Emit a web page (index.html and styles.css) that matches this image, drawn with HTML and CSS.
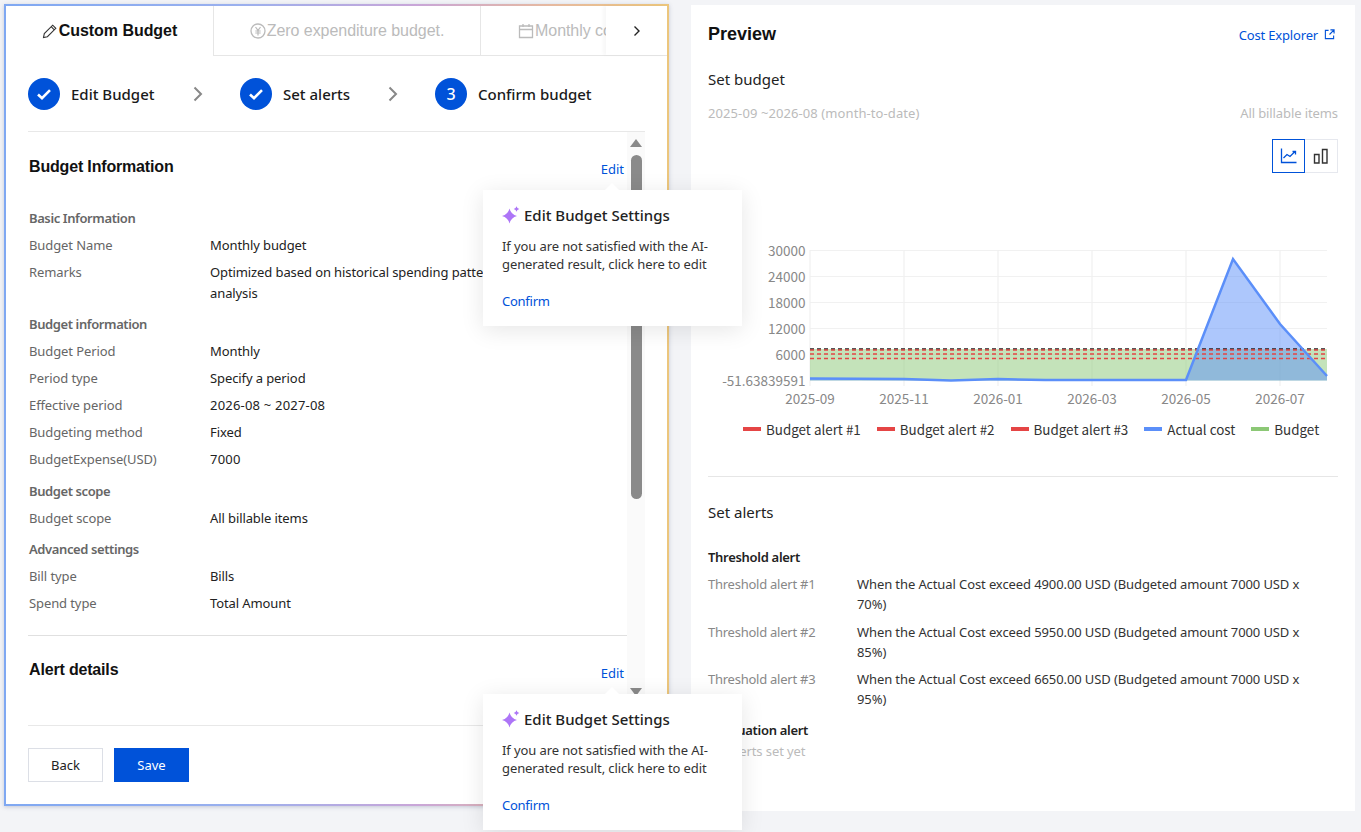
FILE: index.html
```html
<!DOCTYPE html>
<html lang="en">
<head>
<meta charset="utf-8">
<title>Custom Budget</title>
<link rel="stylesheet" href="styles.css">
</head>
<body>
<main class="page">
  <section class="editor">
    <div class="tabs">
      <div class="tab tab-active tab-one">
        <svg class="tab-icon" viewBox="0 0 16 16"><path d="M1.500 14.500l.8-3.900 8.400-8.400 3.100 3.100-8.400 8.400-3.900.8zM9.200 3.700l3.100 3.100" fill="none" stroke="#333" stroke-width="1.100"/></svg>
        <span>Custom Budget</span>
      </div>
      <div class="tab tab-two">
        <svg class="tab-icon" viewBox="0 0 16 16"><circle cx="8" cy="8" r="7" fill="none" stroke="#bbb" stroke-width="1.300"/><path d="M5.500 4l2.500 3.400L10.500 4M8 7.400V12.500M5.300 8h5.400M5.300 10h5.400" fill="none" stroke="#bbb" stroke-width="1.200"/></svg>
        <span>Zero expenditure budget.</span>
      </div>
      <div class="tab tab-three">
        <svg class="tab-icon" viewBox="0 0 16 16"><path d="M1.500 3h13v11.500h-13zM1.500 6.500h13M5 1v3M11 1v3" fill="none" stroke="#bbb" stroke-width="1.300"/></svg>
        <span>Monthly cost budget</span>
      </div>
      <div class="tab-next">
        <svg class="chev-small" viewBox="0 0 8 12"><path d="M1.500 1.500L6 6l-4.500 4.500" fill="none" stroke="#222" stroke-width="1.400"/></svg>
      </div>
    </div>

    <div class="steps">
      <div class="step step-first">
        <span class="step-dot"><svg viewBox="0 0 16 16"><path d="M2 8.500l4 3.700 8-8" fill="none" stroke="#fff" stroke-width="2.600"/></svg></span>
        <span class="step-label">Edit Budget</span>
      </div>
      <svg class="step-chev" viewBox="0 0 10 16"><path d="M1.500 1.500L8 8l-6.500 6.500" fill="none" stroke="#888" stroke-width="2"/></svg>
      <div class="step step-second">
        <span class="step-dot"><svg viewBox="0 0 16 16"><path d="M2 8.500l4 3.700 8-8" fill="none" stroke="#fff" stroke-width="2.600"/></svg></span>
        <span class="step-label">Set alerts</span>
      </div>
      <svg class="step-chev" viewBox="0 0 10 16"><path d="M1.500 1.500L8 8l-6.500 6.500" fill="none" stroke="#888" stroke-width="2"/></svg>
      <div class="step step-third">
        <span class="step-dot">3</span>
        <span class="step-label">Confirm budget</span>
      </div>
    </div>

    <div class="scroll-wrap">
      <div class="scroll-content">
        <div class="section-head">
          <h2>Budget Information</h2>
          <a class="link edit-link">Edit</a>
        </div>
        <h3 class="group group-first">Basic Information</h3>
        <div class="row"><span class="key">Budget Name</span><span class="val">Monthly budget</span></div>
        <div class="row row-tall"><span class="key">Remarks</span><span class="val">Optimized based on historical spending pattern analysis</span></div>
        <h3 class="group">Budget information</h3>
        <div class="row"><span class="key">Budget Period</span><span class="val">Monthly</span></div>
        <div class="row"><span class="key">Period type</span><span class="val">Specify a period</span></div>
        <div class="row"><span class="key">Effective period</span><span class="val val-num">2026-08 ~ 2027-08</span></div>
        <div class="row"><span class="key">Budgeting method</span><span class="val">Fixed</span></div>
        <div class="row"><span class="key">BudgetExpense(USD)</span><span class="val val-num">7000</span></div>
        <h3 class="group">Budget scope</h3>
        <div class="row"><span class="key">Budget scope</span><span class="val">All billable items</span></div>
        <h3 class="group group-tight">Advanced settings</h3>
        <div class="row"><span class="key">Bill type</span><span class="val">Bills</span></div>
        <div class="row"><span class="key">Spend type</span><span class="val">Total Amount</span></div>
        <div class="section-head section-alert">
          <h2>Alert details</h2>
          <a class="link edit-link">Edit</a>
        </div>
      </div>
      <div class="scrollbar">
        <span class="arrow-up"></span>
        <span class="thumb"></span>
        <span class="arrow-down"></span>
      </div>
    </div>

    <div class="footer">
      <button class="btn btn-back">Back</button>
      <button class="btn btn-save">Save</button>
    </div>
  </section>

  <section class="preview">
    <div class="preview-head">
      <h1>Preview</h1>
      <a class="link explorer">Cost Explorer
        <svg viewBox="0 0 12 12"><path d="M5 1.500H1.500v9h9V7M7 1h4v4M11 1L6 6" fill="none" stroke="#0052d9" stroke-width="1.200"/></svg>
      </a>
    </div>
    <div class="sub-title">Set budget</div>
    <div class="meta"><span class="meta-date">2025-09 ~2026-08 (month-to-date)</span><span>All billable items</span></div>
    <div class="toggle">
      <span class="toggle-btn toggle-on"><svg viewBox="0 0 18 18"><path d="M1.500 1.500v14h15" fill="none" stroke="#0052d9" stroke-width="1.300"/><path d="M3.500 11l3.500-3.500 3 2 5-5M12.500 4.500h3v3" fill="none" stroke="#0052d9" stroke-width="1.300"/></svg></span>
      <span class="toggle-btn"><svg viewBox="0 0 18 18"><path d="M2.500 7.500h4.500v8.500H2.500zM10.500 2.500H15v13.500h-4.500z" fill="none" stroke="#333" stroke-width="1.400"/></svg></span>
    </div>
    <svg class="chart" viewBox="0 -10 630 210">
      <g stroke="#f1f1f1" stroke-width="1.200">
        <path d="M102 2.500H619M102 28.500H619M102 54.500H619M102 80.500H619M102 106.500H619"/>
        <path d="M102 2V138M196 2V138M290 2V138M384 2V138M478 2V138M572 2V138"/>
      </g>
      <path d="M102 101H619V132.500H102z" fill="#9dd18c" fill-opacity=".6"/>
      <path d="M102 130.500L196 131L290 133L384 132.500L478 132.500L525 11L572 76L619 128V132.500H102z" fill="#5b8ff9" fill-opacity=".5"/>
      <g fill="none" stroke-width="1.300" stroke-dasharray="4 3">
        <path d="M102 101H619" stroke="#222"/>
        <path d="M102 102H619" stroke="#e54545"/>
        <path d="M102 106H619" stroke="#e54545"/>
        <path d="M102 110.500H619" stroke="#e54545"/>
      </g>
      <path d="M102 130.500L196 131L243 132.500L290 131L337 132L478 132L525 11L572 76L619 128" fill="none" stroke="#5b8ff9" stroke-width="2.500"/>
      <g class="axis" text-anchor="end">
        <text x="97.500" y="7.500">30000</text>
        <text x="97.500" y="33.500">24000</text>
        <text x="97.500" y="59.500">18000</text>
        <text x="97.500" y="85.500">12000</text>
        <text x="97.500" y="111.500">6000</text>
        <text x="97.500" y="137.500">-51.63839591</text>
      </g>
      <g class="axis" text-anchor="middle">
        <text x="102" y="156">2025-09</text>
        <text x="196" y="156">2025-11</text>
        <text x="290" y="156">2026-01</text>
        <text x="384" y="156">2026-03</text>
        <text x="478" y="156">2026-05</text>
        <text x="572" y="156">2026-07</text>
      </g>
    </svg>
    <div class="legend">
      <span class="legend-item"><i class="swatch swatch-red"></i>Budget alert #1</span>
      <span class="legend-item"><i class="swatch swatch-red"></i>Budget alert #2</span>
      <span class="legend-item"><i class="swatch swatch-red"></i>Budget alert #3</span>
      <span class="legend-item"><i class="swatch swatch-blue"></i>Actual cost</span>
      <span class="legend-item"><i class="swatch swatch-green"></i>Budget</span>
    </div>
    <div class="alerts">
      <div class="alerts-title">Set alerts</div>
      <h4>Threshold alert</h4>
      <div class="alert-row"><span class="alert-key">Threshold alert #1</span><span class="alert-val">When the Actual Cost exceed 4900.00 USD (Budgeted amount 7000 USD x 70%)</span></div>
      <div class="alert-row"><span class="alert-key">Threshold alert #2</span><span class="alert-val">When the Actual Cost exceed 5950.00 USD (Budgeted amount 7000 USD x 85%)</span></div>
      <div class="alert-row"><span class="alert-key">Threshold alert #3</span><span class="alert-val">When the Actual Cost exceed 6650.00 USD (Budgeted amount 7000 USD x 95%)</span></div>
      <h4 class="fluct">Fluctuation alert</h4>
      <div class="none">No alerts set yet</div>
    </div>
  </section>

  <aside class="pop pop-one">
    <div class="pop-title">
      <svg viewBox="0 0 18 18"><path d="M7.500 2.500Q9 8.500 15 10Q9 11.500 7.500 17.500Q6 11.500 0 10Q6 8.500 7.500 2.500z" fill="#ad75f7"/><path d="M14.500 .2Q15 2.500 17.300 3Q15 3.500 14.500 5.800Q14 3.500 11.700 3Q14 2.500 14.500 .2z" fill="#ad75f7"/></svg>
      <span>Edit Budget Settings</span>
    </div>
    <p>If you are not satisfied with the AI-generated result, click here to edit</p>
    <a class="link pop-confirm">Confirm</a>
  </aside>
  <aside class="pop pop-two">
    <div class="pop-title">
      <svg viewBox="0 0 18 18"><path d="M7.500 2.500Q9 8.500 15 10Q9 11.500 7.500 17.500Q6 11.500 0 10Q6 8.500 7.500 2.500z" fill="#ad75f7"/><path d="M14.500 .2Q15 2.500 17.300 3Q15 3.500 14.500 5.800Q14 3.500 11.700 3Q14 2.500 14.500 .2z" fill="#ad75f7"/></svg>
      <span>Edit Budget Settings</span>
    </div>
    <p>If you are not satisfied with the AI-generated result, click here to edit</p>
    <a class="link pop-confirm">Confirm</a>
  </aside>
</main>
</body>
</html>
```
FILE: styles.css
```css
* { box-sizing: border-box; }
html, body { margin: 0; height: 100%; }
body {
  background: #f3f4f7;
  font-family: "Noto Sans", "Noto Sans CJK SC", sans-serif;
  font-size: 13px;
  letter-spacing: -.1px;
  color: #222;
  overflow: hidden;
}
.page {
  position: relative;
  width: 1361px;
  height: 832px;
  display: flex;
  align-items: flex-start;
  gap: 22px;
  padding: 4px 6px 0 4px;
}
.link { color: #0052d9; }

/* editor card */
.editor {
  width: 665px;
  height: 802px;
  border: 2px solid transparent;
  background:
    linear-gradient(#fff, #fff) padding-box,
    linear-gradient(90deg, #7fa8f2 0%, #9ab0ee 35%, #c9a6d8 62%, #e6b9a0 82%, #ecc67c 100%) border-box;
  box-shadow: 0 1px 4px rgba(60, 70, 120, .25);
  display: flex;
  flex-direction: column;
}
.tabs {
  display: flex;
  height: 50px;
  flex: none;
  border-bottom: 1px solid #e6e6e6;
  font-family: "Liberation Sans", sans-serif;
  font-size: 16px;
  letter-spacing: -.05px;
}
.tab {
  display: flex;
  align-items: center;
  justify-content: center;
  gap: 1px;
  white-space: nowrap;
  color: #bbb;
  border-right: 1px solid #e6e6e6;
  overflow: hidden;
}
.tab-icon { width: 16px; height: 16px; flex: none; }
.tab-active {
  color: #111;
  font-weight: 700;
  height: 50px;
  background: #fff;
}
.tab-one { width: 208px; }
.tab-two { width: 267px; }
.tab-three { width: 125px; justify-content: flex-start; padding-left: 37px; border-right: 0; }
.tab-next {
  flex: 1;
  display: flex;
  align-items: center;
  padding-left: 27px;
  background: #fff;
  box-shadow: -3px 0 3px rgba(0, 0, 0, .03);
}
.chev-small { width: 8px; height: 12px; }

.steps {
  flex: none;
  height: 76px;
  margin: 0 22px;
  padding-top: 22px;
  border-bottom: 1px solid #e8e8e8;
  display: flex;
  align-items: flex-start;
}
.step { display: flex; align-items: center; gap: 11px; height: 32px; }
.step-dot {
  width: 32px;
  height: 32px;
  border-radius: 50%;
  background: #0052d9;
  color: #fff;
  display: flex;
  align-items: center;
  justify-content: center;
  font-size: 16px;
  font-weight: 500;
}
.step-dot svg { width: 16px; height: 16px; }
.step-label { font-size: 15px; font-weight: 500; color: #1a1a1a; letter-spacing: 0; }
.step-first { width: 165px; }
.step-second { width: 148px; margin-left: 37px; }
.step-third { margin-left: 37px; }
.step-chev { width: 10px; height: 16px; margin-top: 8px; flex: none; }

.scroll-wrap {
  flex: none;
  height: 594px;
  margin: 0 22px;
  display: flex;
  border-bottom: 1px solid #e8e8e8;
}
.scroll-content { flex: 1; min-width: 0; }
.section-head {
  display: flex;
  justify-content: space-between;
  align-items: flex-start;
  padding: 25px 3px 0 1px;
  height: 63px;
}
.section-head h2 {
  margin: 0;
  font-family: "Liberation Sans", sans-serif;
  font-size: 16px;
  line-height: 20px;
  font-weight: 700;
  letter-spacing: -.17px;
  color: #111;
}
.edit-link { line-height: 18px; padding-top: 3px; font-size: 13px; letter-spacing: 0; }
.section-alert { border-top: 1px solid #e0e0e0; margin-top: 19px; padding-top: 24px; height: 90px; }
.section-alert .edit-link { padding-top: 4px; }
.group {
  margin: 0;
  padding: 10px 0 0 1px;
  height: 32px;
  font-size: 13px;
  line-height: 18px;
  font-weight: 600;
  letter-spacing: -.4px;
  color: #666;
}
.group-first { padding-top: 14px; height: 36px; }
.group-tight { padding-top: 9px; height: 31px; }
.row { display: flex; height: 27px; line-height: 18px; padding: 5px 0 0 1px; }
.row-tall { height: 47px; line-height: 21px; padding-top: 4px; }
.row-tall .val { flex: none; width: 300px; padding: 0; }
.key { width: 181px; flex: none; color: #666; }
.val { flex: 1; color: #222; padding-right: 28px; }
.val-num { letter-spacing: .2px; }

.scrollbar {
  width: 18px;
  flex: none;
  background: #fafafa;
  display: flex;
  flex-direction: column;
  align-items: center;
}
.arrow-up {
  margin-top: 7px;
  border: 6px solid transparent;
  border-top: 0;
  border-bottom: 8px solid #8a8a8a;
}
.thumb {
  margin-top: 8px;
  width: 11px;
  height: 344px;
  border-radius: 6px;
  background: #8a8a8a;
}
.arrow-down {
  margin-top: 189px;
  border: 6px solid transparent;
  border-bottom: 0;
  border-top: 8px solid #8a8a8a;
}

.footer { display: flex; gap: 11px; margin: 0 22px; padding-top: 22px; }
.btn {
  height: 34px;
  width: 75px;
  font: inherit;
  border-radius: 0;
}
.btn-back { background: #fff; border: 1px solid #dcdfe6; color: #222; }
.btn-save { background: #0052d9; border: 1px solid #0052d9; color: #fff; }

/* preview card */
.preview {
  width: 664px;
  height: 806px;
  margin-top: 1px;
  background: #fff;
  padding: 0 17px;
}
.preview-head { display: flex; justify-content: space-between; align-items: center; height: 57px; padding-top: 1px; }
.preview-head h1 {
  margin: 0;
  font-family: "Liberation Sans", sans-serif;
  font-size: 18px;
  font-weight: 700;
  letter-spacing: 0;
  color: #111;
}
.explorer { display: flex; align-items: center; gap: 6px; padding-top: 2px; letter-spacing: -.18px; }
.explorer svg { width: 11px; height: 11px; margin-right: 3px; margin-top: -2px; }
.sub-title { font-size: 15px; line-height: 22px; margin-top: 6px; color: #222; letter-spacing: 0; }
.meta {
  display: flex;
  justify-content: space-between;
  margin-top: 14px;
  line-height: 18px;
  font-size: 13px;
  color: #bbb;
}
.meta-date { letter-spacing: .09px; }
.toggle { display: flex; justify-content: flex-end; margin-top: 17px; }
.toggle-btn {
  width: 33px;
  height: 34px;
  border: 1px solid #e6e8ee;
  border-left: 0;
  display: flex;
  align-items: center;
  justify-content: center;
}
.toggle-on { border: 1px solid #0052d9; }
.toggle-btn svg { width: 18px; height: 18px; }
.chart { display: block; width: 630px; height: 210px; margin-top: 65px; }
.axis text { font-family: "Noto Sans CJK SC", "Noto Sans", sans-serif; font-size: 13.500px; letter-spacing: 0; fill: #888; }
.legend {
  display: flex;
  height: 20px;
  margin-top: -29px;
  padding-left: 35px;
  gap: 16px;
  font-family: "Noto Sans CJK SC", "Noto Sans", sans-serif;
  font-size: 13.400px;
  letter-spacing: 0;
  line-height: 20px;
  color: #333;
}
.legend-item { display: flex; align-items: center; gap: 5px; white-space: nowrap; }
.swatch { width: 18px; height: 4px; display: block; }
.swatch-red { background: #e54545; }
.swatch-blue { background: #5b8ff9; }
.swatch-green { background: #8cc876; }

.alerts { margin-top: 37px; border-top: 1px solid #e6e6e6; }
.alerts-title { font-size: 15px; line-height: 22px; margin-top: 24px; letter-spacing: 0; }
.alerts h4 { margin: 24px 0 0; font-size: 13px; line-height: 20px; font-weight: 600; letter-spacing: -.3px; color: #222; }
.alert-row { display: flex; margin-top: 7px; line-height: 20px; min-height: 41px; }
.alert-row + .alert-row { margin-top: 6.500px; }
.alert-key { width: 149px; flex: none; color: #888; letter-spacing: -.25px; }
.alert-val { flex: 1; color: #333; padding-right: 30px; }
.alerts .fluct { margin-top: 10px; }
.none { color: #bbb; margin-top: 1px; line-height: 20px; }

/* popovers lie above the page */
.pop {
  position: absolute;
  left: 483px;
  width: 259px;
  height: 136px;
  padding: 14px 19px;
  background: #fff;
  box-shadow: 0 4px 22px rgba(0, 0, 0, .1);
}
.pop::before {
  content: "";
  position: absolute;
  left: 122px;
  top: -7px;
  border: 7px solid transparent;
  border-top: 0;
  border-bottom: 7px solid #fff;
}
.pop-one { top: 190px; }
.pop-two { top: 694px; }
.pop-title { display: flex; align-items: center; gap: 4px; height: 22px; font-size: 15px; font-weight: 500; letter-spacing: 0; color: #222; }
.pop-title svg { width: 18px; height: 18px; }
.pop p { margin: 11px 0 0; line-height: 18px; font-size: 13px; color: #333; }
.pop-confirm { display: block; margin-top: 19px; line-height: 18px; font-size: 13px; letter-spacing: -.25px; }
```
